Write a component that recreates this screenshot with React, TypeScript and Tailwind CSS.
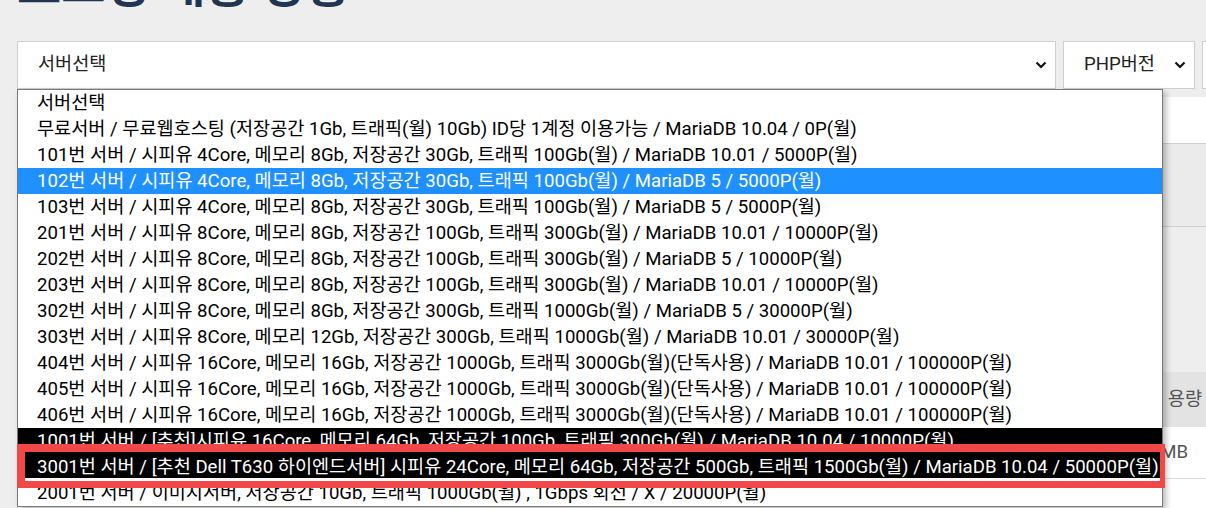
const servers = [
  '서버선택',
  '무료서버 / 무료웹호스팅 (저장공간 1Gb, 트래픽(월) 10Gb) ID당 1계정 이용가능 / MariaDB 10.04 / 0P(월)',
  '101번 서버 / 시피유 4Core, 메모리 8Gb, 저장공간 30Gb, 트래픽 100Gb(월) / MariaDB 10.01 / 5000P(월)',
  '102번 서버 / 시피유 4Core, 메모리 8Gb, 저장공간 30Gb, 트래픽 100Gb(월) / MariaDB 5 / 5000P(월)',
  '103번 서버 / 시피유 4Core, 메모리 8Gb, 저장공간 30Gb, 트래픽 100Gb(월) / MariaDB 5 / 5000P(월)',
  '201번 서버 / 시피유 8Core, 메모리 8Gb, 저장공간 100Gb, 트래픽 300Gb(월) / MariaDB 10.01 / 10000P(월)',
  '202번 서버 / 시피유 8Core, 메모리 8Gb, 저장공간 100Gb, 트래픽 300Gb(월) / MariaDB 5 / 10000P(월)',
  '203번 서버 / 시피유 8Core, 메모리 8Gb, 저장공간 100Gb, 트래픽 300Gb(월) / MariaDB 10.01 / 10000P(월)',
  '302번 서버 / 시피유 8Core, 메모리 8Gb, 저장공간 300Gb, 트래픽 1000Gb(월) / MariaDB 5 / 30000P(월)',
  '303번 서버 / 시피유 8Core, 메모리 12Gb, 저장공간 300Gb, 트래픽 1000Gb(월) / MariaDB 10.01 / 30000P(월)',
  '404번 서버 / 시피유 16Core, 메모리 16Gb, 저장공간 1000Gb, 트래픽 3000Gb(월)(단독사용) / MariaDB 10.01 / 100000P(월)',
  '405번 서버 / 시피유 16Core, 메모리 16Gb, 저장공간 1000Gb, 트래픽 3000Gb(월)(단독사용) / MariaDB 10.01 / 100000P(월)',
  '406번 서버 / 시피유 16Core, 메모리 16Gb, 저장공간 1000Gb, 트래픽 3000Gb(월)(단독사용) / MariaDB 10.01 / 100000P(월)',
  '1001번 서버 / [추천]시피유 16Core, 메모리 64Gb, 저장공간 100Gb, 트래픽 300Gb(월) / MariaDB 10.04 / 10000P(월)',
  '3001번 서버 / [추천 Dell T630 하이엔드서버] 시피유 24Core, 메모리 64Gb, 저장공간 500Gb, 트래픽 1500Gb(월) / MariaDB 10.04 / 50000P(월)',
  '2001번 서버 / 이미지서버, 저장공간 10Gb, 트래픽 1000Gb(월) , 1Gbps 회선 / X / 20000P(월)',
]

const font = "font-['Roboto','Noto_Sans_CJK_KR',sans-serif]"

function Chevron() {
  return (
    <svg width="12" height="8" viewBox="0 0 12 8" className="shrink-0">
      <polyline points="1.5,1.5 6,6 10.5,1.5" fill="none" stroke="#111" strokeWidth="2.2" />
    </svg>
  )
}

function SelectBox({ label, width }: { label: string; width: string }) {
  return (
    <div className={`${width} h-[48px] shrink-0 bg-white border border-[#cfcfcf] flex items-center justify-between pl-[20px] pr-[8px]`}>
      <span className="text-[18.6px] text-[#222]">{label}</span>
      <Chevron />
    </div>
  )
}

function ServerList() {
  return (
    <div className="absolute left-[17px] top-[89px] w-[1146px] bg-white border border-[#7a7a7a] shadow-[3px_3px_6px_rgba(0,0,0,0.28)]">
      {servers.map((s, i) => {
        let cls = 'text-black'
        if (i === 3) cls = 'bg-[#1e90ff] text-white'
        if (i === 13) cls = 'bg-black text-white'
        if (i === 14) cls = 'bg-black text-white shadow-[inset_0_-2px_0_#fff]'
        return (
          <div key={i} className={`h-[26px] flex items-center pl-[19px] pt-[2px] whitespace-nowrap text-[18.6px] ${cls}`}>
            {s}
          </div>
        )
      })}
    </div>
  )
}

export default function App() {
  return (
    <div className={`relative w-[1206px] h-[508px] overflow-hidden bg-[#eeeeee] ${font}`}>
      <div className="h-[12px] overflow-hidden pl-[17px]">
        <h1 className="-mt-[38px] text-[48px] leading-none font-bold text-[#1f3552] whitespace-nowrap">호스팅 개통 상황</h1>
      </div>

      <div className="pl-[17px] mt-[29px] flex gap-[7px] w-[1400px]">
        <SelectBox label="서버선택" width="w-[1039px]" />
        <SelectBox label="PHP버전" width="w-[132px]" />
        <SelectBox label="" width="w-[132px]" />
      </div>

      <div className="ml-[17px] mt-[8px] h-[47px] bg-white border-b border-[#d0d0d0]" />
      <div className="ml-[17px] h-[83px] bg-[#ebebeb] border-b border-[#cfcfcf]" />
      <div className="ml-[17px] h-[145px]" />

      <div className="ml-[17px] h-[55px] bg-[#e3e3e3] flex items-center justify-end pr-[4px]">
        <span className="text-[18.6px] text-[#555]">용량</span>
      </div>
      <div className="ml-[17px] h-[52px] bg-white border-b border-[#dcdcdc] flex items-center justify-end pr-[18px]">
        <span className="text-[18.6px] text-[#555]">MB</span>
      </div>
      <div className="ml-[17px] h-[40px] bg-white" />

      <ServerList />

      <div className="absolute left-[17px] top-[444px] w-[1148px] h-[44px] border-[#f24848] border-t-[8px] border-b-[7px] border-l-[8px] border-r-[5px]" />
    </div>
  )
}
